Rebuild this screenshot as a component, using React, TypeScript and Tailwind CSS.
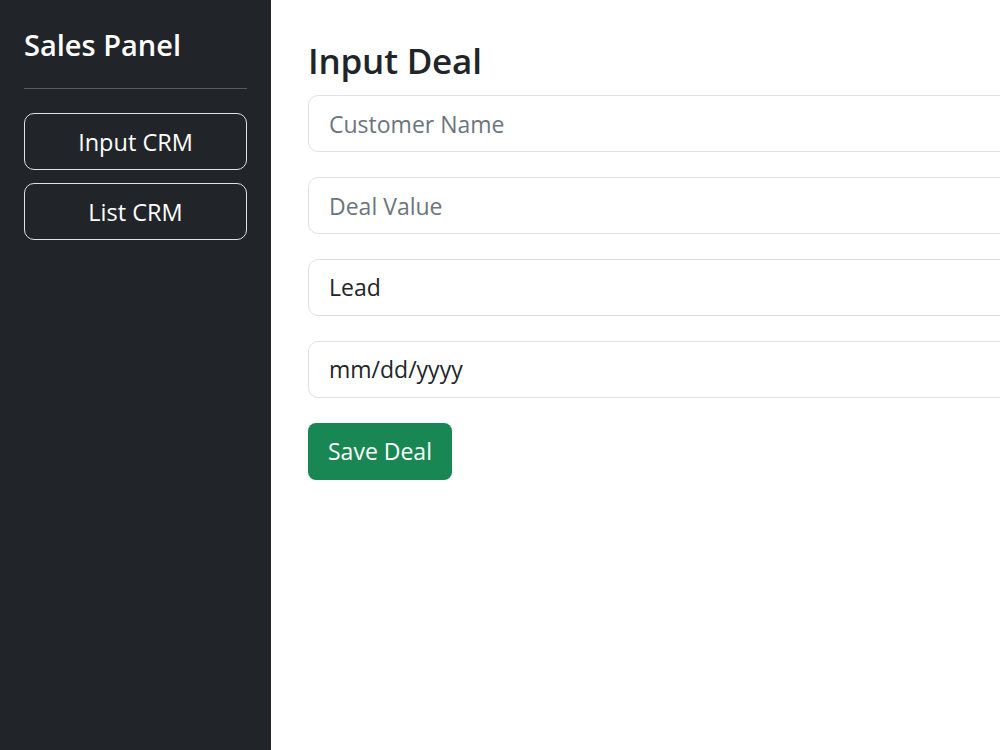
import React from 'react';

export default function App() {
  return (
    <div className="flex w-screen h-screen overflow-hidden bg-white font-['Open_Sans',sans-serif] text-[#212529]">
      <aside className="w-[271px] shrink-0 bg-[#212529] px-6 pt-[28px] text-white">
        <h2 className="text-[29px] font-semibold leading-[1.2]">Sales Panel</h2>
        <hr className="mt-[25px] mb-6 border-t border-white/25" />
        <div className="flex flex-col gap-[13px]">
          <button className="h-[57px] w-full rounded-[10px] border border-[#dee2e6] pt-[2px] text-[23.5px]">
            Input CRM
          </button>
          <button className="h-[57px] w-full rounded-[10px] border border-[#dee2e6] pt-[2px] text-[23.5px]">
            List CRM
          </button>
        </div>
      </aside>

      <main className="w-[900px] shrink-0 pl-[37px] pt-[40px]">
        <h1 className="text-[35px] font-semibold leading-[1.2] tracking-[-0.2px] mb-[13px]">Input Deal</h1>
        <form className="flex flex-col gap-[25px]">
          <input
            placeholder="Customer Name"
            className="h-[57px] w-full rounded-[10px] border border-[#dee2e6] px-5 text-[23px] placeholder:text-[#6c757d] outline-none"
          />
          <input
            placeholder="Deal Value"
            className="h-[57px] w-full rounded-[10px] border border-[#dee2e6] px-5 text-[23px] placeholder:text-[#6c757d] outline-none"
          />
          <div className="h-[57px] w-full rounded-[10px] border border-[#dee2e6] px-5 flex items-center text-[23px]">
            Lead
          </div>
          <div className="h-[57px] w-full rounded-[10px] border border-[#dee2e6] px-5 flex items-center text-[23px]">
            mm/dd/yyyy
          </div>
          <div>
            <button
              type="button"
              className="h-[57px] rounded-[8px] bg-[#198754] px-5 text-[23px] text-white"
            >
              Save Deal
            </button>
          </div>
        </form>
      </main>
    </div>
  );
}
